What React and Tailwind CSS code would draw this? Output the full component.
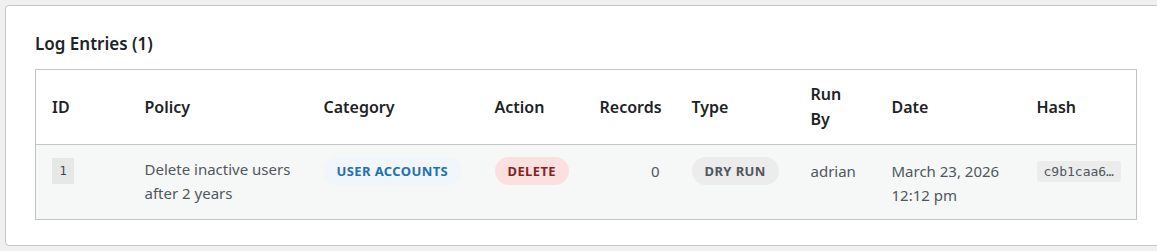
import React from 'react';

const cols = [
    { key: 'id', label: 'ID', w: 'w-[93px]' },
    { key: 'policy', label: 'Policy', w: 'w-[179px]' },
    { key: 'category', label: 'Category', w: 'w-[171px]' },
    { key: 'action', label: 'Action', w: 'w-[105px]' },
    { key: 'records', label: 'Records', w: 'w-[92px]', right: true },
    { key: 'type', label: 'Type', w: 'w-[119px]' },
    { key: 'runBy', label: 'Run By', w: 'w-[81px]' },
    { key: 'date', label: 'Date', w: 'w-[145px]' },
    { key: 'hash', label: 'Hash', w: 'w-[116px]' },
];

const Pill = ({ className, children }) => (
    <span className={`inline-flex h-[28px] items-center whitespace-nowrap rounded-full px-[13px] text-[13px] font-bold uppercase tracking-[0.4px] ${className}`}>
        {children}
    </span>
);

const App = () => {
    return (
        <div className="h-[251px] w-[1157px] overflow-hidden bg-[#f0f0f1] pt-[5px] pl-[5px] font-['Noto_Sans','Open_Sans',sans-serif]">
            <div className="w-[1162px] rounded-[4px] border border-[#c3c4c7] bg-white px-[29px] pt-[25px] pb-[25px]">
                <h2 className="mb-[13px] text-[17px] leading-[25px] font-semibold text-[#1d2327]">Log Entries (1)</h2>

                <table className="w-[1101px] table-fixed border-collapse border border-[#c3c4c7]">
                    <thead>
                        <tr className="border-b border-[#c3c4c7] bg-white">
                            {cols.map((c) => (
                                <th
                                    key={c.key}
                                    className={`${c.w} px-4 py-3 align-middle text-[16px] leading-[25px] font-semibold text-[#1d2327] ${c.right ? 'text-right' : 'text-left'}`}
                                >
                                    {c.key === 'runBy' ? <>Run<br />By</> : c.label}
                                </th>
                            ))}
                        </tr>
                    </thead>
                    <tbody>
                        <tr className="bg-[#f6f7f7] align-top text-[15px] leading-[24px] text-[#50575e]">
                            <td className="px-4 pt-3 pb-[12px]">
                                <span className="inline-flex h-[26px] w-[22px] items-center justify-center bg-[#e6e7e7] font-['DejaVu_Sans_Mono',monospace] text-[12px] text-[#3c434a]">1</span>
                            </td>
                            <td className="px-4 pt-3 pb-[12px]">Delete inactive users after 2 years</td>
                            <td className="px-4 pt-3 pb-[12px]">
                                <Pill className="bg-[#f0f6fc] text-[#2271b1]">User Accounts</Pill>
                            </td>
                            <td className="px-4 pt-3 pb-[12px]">
                                <Pill className="bg-[#fbe0e0] text-[#8a1f1f]">Delete</Pill>
                            </td>
                            <td className="px-4 pt-3 pb-[12px] text-right">
                                <span className="inline-block leading-[28px]">0</span>
                            </td>
                            <td className="px-4 pt-3 pb-[12px]">
                                <Pill className="bg-[#ececec] text-[#50575e]">Dry Run</Pill>
                            </td>
                            <td className="px-4 pt-3 pb-[12px]">
                                <span className="inline-block leading-[28px]">adrian</span>
                            </td>
                            <td className="px-4 pt-3 pb-[12px]">
                                <div className="pt-[2px]">March 23, 2026<br />12:12 pm</div>
                            </td>
                            <td className="px-4 pt-3 pb-[12px]">
                                <code className="mt-[4px] inline-block whitespace-nowrap rounded-[3px] bg-[#ececec] px-[7px] font-['DejaVu_Sans_Mono',monospace] text-[13px] leading-[21px] text-[#50575e]">c9b1caa6…</code>
                            </td>
                        </tr>
                    </tbody>
                </table>
            </div>
        </div>
    );
};

export default App;
